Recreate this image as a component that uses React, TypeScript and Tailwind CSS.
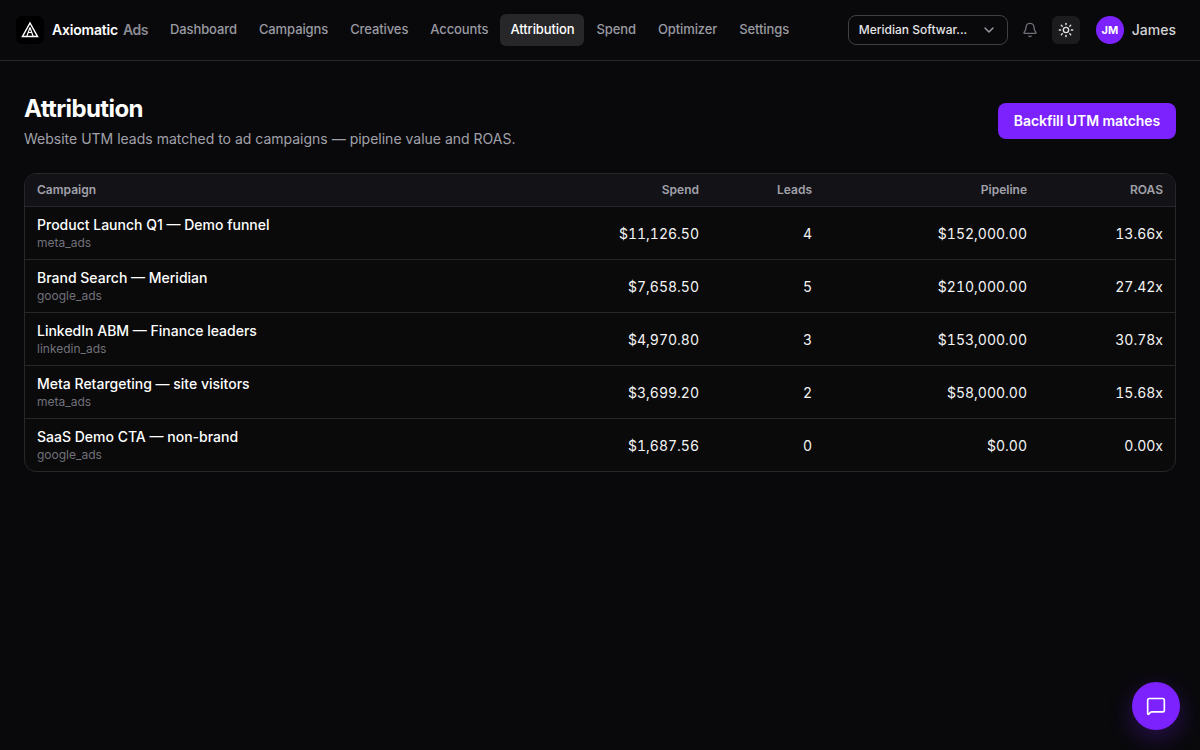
import { Bell, ChevronDown, MessageSquare, Sun } from "lucide-react";

const nav = ["Dashboard", "Campaigns", "Creatives", "Accounts", "Attribution", "Spend", "Optimizer", "Settings"];
const rows = [
  ["Product Launch Q1 — Demo funnel", "meta_ads", "$11,126.50", "4", "$152,000.00", "13.66x"],
  ["Brand Search — Meridian", "google_ads", "$7,658.50", "5", "$210,000.00", "27.42x"],
  ["LinkedIn ABM — Finance leaders", "linkedin_ads", "$4,970.80", "3", "$153,000.00", "30.78x"],
  ["Meta Retargeting — site visitors", "meta_ads", "$3,699.20", "2", "$58,000.00", "15.68x"],
  ["SaaS Demo CTA — non-brand", "google_ads", "$1,687.56", "0", "$0.00", "0.00x"],
];

export default function App() {
  return (
    <div className="min-h-[750px] bg-[#09090b] text-white font-['Inter',sans-serif] relative">
      <header className="h-[61px] border-b border-[#27272a] flex items-center pl-4 pr-6">
        <div className="flex items-center w-[144px]">
          <div className="w-7 h-7 rounded-md bg-black flex items-center justify-center">
            <svg width="18" height="18" viewBox="0 0 18 18" fill="none" stroke="white" strokeWidth="1.5">
              <path d="M9 2 L16.5 15.5 H1.5 Z" />
              <path d="M9 6.5 L12.2 15.5 M9 6.5 L5.8 15.5 M6.8 11.5 H11.2" strokeWidth="1.2" />
            </svg>
          </div>
          <span className="ml-2 text-sm font-semibold tracking-[-0.2px]">Axiomatic</span>
          <span className="ml-[5px] text-sm font-semibold text-[#8b8b93] tracking-[-0.4px]">Ads</span>
        </div>
        <nav className="flex items-center gap-[2px]">
          {nav.map((n) => (
            <a
              key={n}
              className={
                n === "Attribution"
                  ? "h-8 px-[10px] flex items-center rounded-md text-[13px] font-medium tracking-[-0.1px] bg-[#27272a] text-white"
                  : "h-8 px-[10px] flex items-center rounded-md text-[13px] font-medium tracking-[-0.1px] text-[#9a9aa2]"
              }
            >
              {n}
            </a>
          ))}
        </nav>
        <div className="ml-auto flex items-center">
          <div className="w-[160px] h-[30px] rounded-lg border border-[#3f3f46] flex items-center justify-between pl-[10px] pr-[10px] text-xs font-medium text-[#e4e4e7]">
            <span>Meridian Softwar...</span>
            <ChevronDown size={16} className="text-[#a1a1aa]" />
          </div>
          <div className="w-7 h-7 ml-2 flex items-center justify-center text-[#71717a]">
            <Bell size={16} />
          </div>
          <div className="w-7 h-7 ml-2 rounded-md bg-[#1c1c1f] flex items-center justify-center text-[#e4e4e7]">
            <Sun size={16} />
          </div>
          <div className="w-7 h-7 ml-4 rounded-full bg-[#7c22ff] flex items-center justify-center text-[11px] font-bold">JM</div>
          <span className="ml-2 text-sm font-medium text-[#d4d4d8]">James</span>
        </div>
      </header>
      <main className="px-6 pt-8">
        <div className="flex items-start justify-between">
          <div>
            <h1 className="text-2xl font-bold tracking-[-0.6px] leading-8">Attribution</h1>
            <p className="mt-1 text-sm text-[#a1a1aa] leading-5">Website UTM leads matched to ad campaigns — pipeline value and ROAS.</p>
          </div>
          <button className="mt-[10px] h-9 w-[178px] rounded-lg bg-[#7c22ff] text-sm font-semibold tracking-[-0.06px]">Backfill UTM matches</button>
        </div>
        <div className="mt-[24px] border border-[#27272a] rounded-xl overflow-hidden bg-[#0a0a0b]">
          <table className="w-full border-collapse table-fixed">
            <thead>
              <tr className="h-[32px] bg-[#131317] border-b border-[#27272a] text-xs font-semibold text-[#a1a1aa]">
                <th className="pl-3 text-left font-semibold">Campaign</th>
                <th className="w-[150px] pr-[11px] text-right font-semibold">Spend</th>
                <th className="w-[113px] pr-[11px] text-right font-semibold">Leads</th>
                <th className="w-[215px] pr-[11px] text-right font-semibold">Pipeline</th>
                <th className="w-[137px] pr-3 text-right font-semibold">ROAS</th>
              </tr>
            </thead>
            <tbody>
              {rows.map((r, i) => (
                <tr key={r[0]} className={i < rows.length - 1 ? "h-[53px] border-b border-[#27272a]" : "h-[53px]"}>
                  <td className="pl-3">
                    <div className="text-sm font-medium leading-5 text-white">{r[0]}</div>
                    <div className="text-xs leading-4 text-[#71717a]">{r[1]}</div>
                  </td>
                  <td className="pr-[11px] pt-[2px] text-right text-sm tabular-nums text-[#f4f4f5]">{r[2]}</td>
                  <td className="pr-[11px] pt-[2px] text-right text-sm tabular-nums text-[#f4f4f5]">{r[3]}</td>
                  <td className="pr-[11px] pt-[2px] text-right text-sm tabular-nums text-[#f4f4f5]">{r[4]}</td>
                  <td className="pr-3 pt-[2px] text-right text-sm tabular-nums text-[#f4f4f5]">{r[5]}</td>
                </tr>
              ))}
            </tbody>
          </table>
        </div>
      </main>
      <button className="absolute right-[20px] bottom-[20px] w-12 h-12 rounded-full bg-[#7c22ff] flex items-center justify-center shadow-[0_8px_24px_rgba(124,34,255,0.3)]">
        <MessageSquare size={20} />
      </button>
    </div>
  );
}
